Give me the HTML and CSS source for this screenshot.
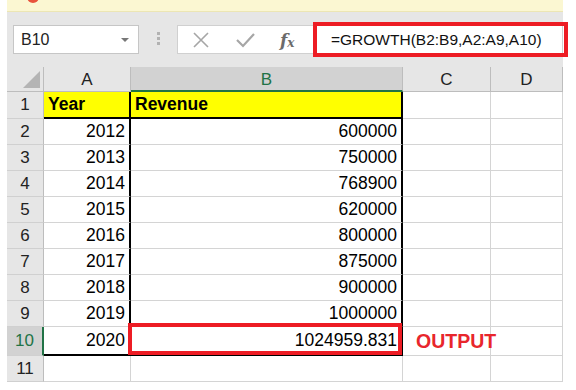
FILE: index.html
```html
<!DOCTYPE html>
<html>
<head>
  <title>GROWTH function</title>
  <link rel="stylesheet" href="styles.css">
</head>
<body>
  <div class="sheet">
    <div class="ribbon-edge"><span class="ribbon-dot"></span></div>

    <div class="toolbar">
      <div class="name-box">
        <span>B10</span>
        <span class="caret"></span>
      </div>
      <div class="grip"><i></i><i></i><i></i></div>
      <div class="formula-bar">
        <div class="fx-buttons">
          <svg width="18" height="18" viewBox="0 0 18 18"><path d="M2 2 L16 16 M16 2 L2 16" stroke="#a6a6a6" stroke-width="1.6" fill="none"/></svg>
          <svg width="20" height="18" viewBox="0 0 20 18"><path d="M2 9 L8 15 L19 3" stroke="#a6a6a6" stroke-width="2.2" fill="none"/></svg>
          <span class="fx">f<sub>x</sub></span>
        </div>
        <div class="formula">
          =GROWTH(B2:B9,A2:A9,A10)
          <span class="callout callout-formula"></span>
        </div>
      </div>
    </div>

    <div class="grid">
      <div class="corner"><span class="tri"></span></div>
      <div class="col-head">A</div>
      <div class="col-head active">B</div>
      <div class="col-head">C</div>
      <div class="col-head">D</div>

      <div class="row-head">1</div>
      <div class="cell yellow bold bk-r bk-b">Year</div>
      <div class="cell yellow bold bk-r bk-b">Revenue</div>
      <div class="cell"></div>
      <div class="cell"></div>

      <div class="row-head">2</div>
      <div class="cell num bk-r">2012</div>
      <div class="cell num bk-r">600000</div>
      <div class="cell"></div>
      <div class="cell"></div>

      <div class="row-head">3</div>
      <div class="cell num bk-r">2013</div>
      <div class="cell num bk-r">750000</div>
      <div class="cell"></div>
      <div class="cell"></div>

      <div class="row-head">4</div>
      <div class="cell num bk-r">2014</div>
      <div class="cell num bk-r">768900</div>
      <div class="cell"></div>
      <div class="cell"></div>

      <div class="row-head">5</div>
      <div class="cell num bk-r">2015</div>
      <div class="cell num bk-r">620000</div>
      <div class="cell"></div>
      <div class="cell"></div>

      <div class="row-head">6</div>
      <div class="cell num bk-r">2016</div>
      <div class="cell num bk-r">800000</div>
      <div class="cell"></div>
      <div class="cell"></div>

      <div class="row-head">7</div>
      <div class="cell num bk-r">2017</div>
      <div class="cell num bk-r">875000</div>
      <div class="cell"></div>
      <div class="cell"></div>

      <div class="row-head">8</div>
      <div class="cell num bk-r">2018</div>
      <div class="cell num bk-r">900000</div>
      <div class="cell"></div>
      <div class="cell"></div>

      <div class="row-head">9</div>
      <div class="cell num bk-r">2019</div>
      <div class="cell num bk-r">1000000</div>
      <div class="cell"></div>
      <div class="cell"></div>

      <div class="row-head active">10</div>
      <div class="cell num bk-r bk-b">2020</div>
      <div class="cell num bk-r bk-b">1024959.831<span class="callout callout-cell"></span></div>
      <div class="cell note">OUTPUT</div>
      <div class="cell"></div>

      <div class="row-head">11</div>
      <div class="cell"></div>
      <div class="cell"></div>
      <div class="cell"></div>
      <div class="cell"></div>
    </div>
  </div>
</body>
</html>
```

FILE: styles.css
```css
body {
  margin: 0;
  background: #fff;
  font-family: "Liberation Sans", Arial, sans-serif;
}

.sheet {
  margin-left: 7px;
  width: 556px;
}

/* ribbon bottom edge */
.ribbon-edge {
  height: 11px;
  background: #fbf7d2;
  border-bottom: 1px solid #ece6b4;
  position: relative;
  overflow: hidden;
}

.ribbon-dot {
  position: absolute;
  left: 20px;
  top: -9px;
  width: 12px;
  height: 12px;
  border-radius: 50%;
  background: #e8533c;
}

/* name box + formula bar */
.toolbar {
  height: 55px;
  background: #e6e6e6;
  display: flex;
  align-items: flex-start;
  padding-top: 13px;
  box-sizing: border-box;
}

.name-box {
  margin-left: 6px;
  width: 126px;
  height: 29px;
  box-sizing: border-box;
  background: #fff;
  border: 1px solid #c6c6c6;
  display: flex;
  align-items: center;
  justify-content: space-between;
  padding: 0 9px 0 7px;
  font-size: 16px;
  color: #222;
}

.caret {
  width: 0;
  height: 0;
  border-left: 4px solid transparent;
  border-right: 4px solid transparent;
  border-top: 4px solid #777;
}

.grip {
  width: 38px;
  display: flex;
  flex-direction: column;
  align-items: center;
  gap: 2px;
  padding-top: 7px;
}

.grip i {
  width: 3px;
  height: 3px;
  background: #b2b2b2;
}

.formula-bar {
  flex: 1;
  height: 29px;
  display: flex;
  background: #fff;
  border: 1px solid #d0d0d0;
  box-sizing: border-box;
}

.fx-buttons {
  width: 135px;
  box-sizing: border-box;
  display: flex;
  align-items: center;
  gap: 25px;
  padding-left: 14px;
}

.fx {
  font-family: "DejaVu Serif", "Liberation Serif", serif;
  font-style: italic;
  font-weight: bold;
  color: #6b6b6b;
  font-size: 17px;
}

.fx sub {
  font-size: 12px;
  vertical-align: -1px;
}

.formula {
  position: relative;
  flex: 1;
  font-size: 15.5px;
  color: #111;
  line-height: 27px;
  padding-left: 18px;
}

.callout {
  position: absolute;
  border: 4px solid #ed1c24;
}

.callout-formula {
  left: 0;
  right: -6px;
  top: -4px;
  bottom: -4px;
}

/* worksheet grid */
.grid {
  display: grid;
  grid-template-columns: 37px 87px 272px 88px 72px;
  grid-template-rows: 25px 27px repeat(8, 26px) 29px 26px;
}

.grid > div {
  box-sizing: border-box;
}

.corner {
  background: #e6e6e6;
  border-right: 1px solid #bdbdbd;
  border-bottom: 1px solid #bdbdbd;
  position: relative;
}

.tri {
  position: absolute;
  right: 3px;
  bottom: 3px;
  width: 0;
  height: 0;
  border-left: 17px solid transparent;
  border-bottom: 17px solid #b4b4b4;
}

.col-head {
  background: #e6e6e6;
  border-right: 1px solid #bdbdbd;
  border-bottom: 1px solid #bdbdbd;
  text-align: center;
  font-size: 17px;
  line-height: 25px;
  color: #222;
}

.col-head.active {
  background: #d2d2d2;
  border-bottom: 2px solid #217346;
  color: #217346;
}

.row-head {
  background: #e6e6e6;
  border-right: 1px solid #bdbdbd;
  border-bottom: 1px solid #d0d0d0;
  text-align: center;
  font-size: 17px;
  display: flex;
  align-items: center;
  justify-content: center;
  color: #222;
}

.row-head.active {
  background: #d2d2d2;
  border-right: 2px solid #217346;
  color: #217346;
}

.cell {
  border-right: 1px solid #d4d4d4;
  border-bottom: 1px solid #d4d4d4;
  font-size: 17.5px;
  display: flex;
  align-items: center;
  padding: 0 4px;
  color: #000;
  position: relative;
}

.yellow {
  background: #ffff00;
}

.bold {
  font-weight: bold;
}

.num {
  justify-content: flex-end;
}

.bk-r {
  border-right: 2px solid #000;
}

.bk-b {
  border-bottom: 2px solid #000;
}

.callout-cell {
  left: -3px;
  right: -1px;
  top: -4px;
  bottom: -1px;
}

.note {
  color: #e8262c;
  font-weight: bold;
  font-size: 19.5px;
  padding-left: 13px;
}
```
